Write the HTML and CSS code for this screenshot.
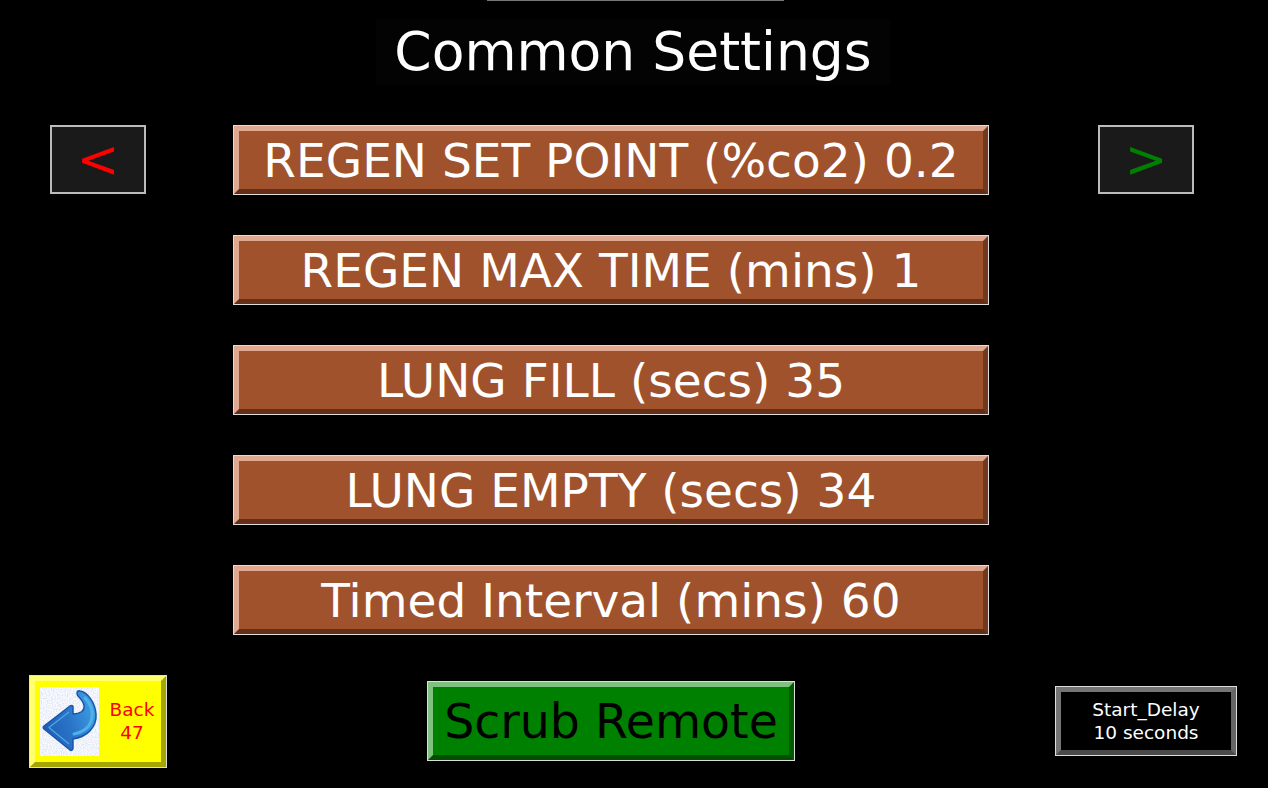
FILE: index.html
```html
<!DOCTYPE html>
<html lang="en">
<head>
    <meta charset="UTF-8">
    <title>Common Settings</title>
    <link rel="stylesheet" href="styles.css">
</head>
<body>
    <div class="top-rule"></div>
    <h1 class="title">Common Settings</h1>

    <div class="settings">
        <button class="nav nav-prev">&lt;</button>
        <div class="setting-list">
            <button class="bevel setting">REGEN SET POINT (%co2) 0.2</button>
            <button class="bevel setting">REGEN MAX TIME (mins) 1</button>
            <button class="bevel setting">LUNG FILL (secs) 35</button>
            <button class="bevel setting">LUNG EMPTY (secs) 34</button>
            <button class="bevel setting">Timed Interval (mins) 60</button>
        </div>
        <button class="nav nav-next">&gt;</button>
    </div>

    <div class="footer">
        <button class="bevel back">
            <svg class="back-icon" width="59" height="69" viewBox="0 0 59 69">
                <defs>
                    <linearGradient id="arrow-fill" x1="0" y1="0.7" x2="1" y2="0.3">
                        <stop offset="0" stop-color="#1d5cb2"/>
                        <stop offset="0.5" stop-color="#2a75c8"/>
                        <stop offset="1" stop-color="#3f9fe2"/>
                    </linearGradient>
                    <filter id="speckle" x="0" y="0" width="100%" height="100%">
                        <feTurbulence type="fractalNoise" baseFrequency="0.8" numOctaves="2" seed="4"/>
                        <feColorMatrix values="0 0 0 0 0.66  0 0 0 0 0.72  0 0 0 0 0.88  0 0 0 2 -0.75"/>
                    </filter>
                </defs>
                <rect width="59" height="69" fill="#fafbfe"/>
                <rect width="59" height="69" filter="url(#speckle)"/>
                <path d="M40 4C47 5 55 15 56 27C57 40 47 50 33 52L33 61C33 63 31 64 30 63L4 42C3 41 3 40 4 39L30 19C32 18 33 19 33 20L33 27C40 27 45 24 44 18C43 14 41 12 38 9C36 6 37 3 40 4Z" fill="url(#arrow-fill)" stroke="#1a55ac" stroke-width="1.500" stroke-linejoin="round"/>
                <path d="M45 11C50 16 53 22 52 30C51 39 44 45 34 47" fill="none" stroke="#4fb0ec" stroke-width="3" stroke-linecap="round"/>
                <path d="M29 25L9 40.500L29 57" fill="none" stroke="#4aa3e4" stroke-width="1.500" stroke-linejoin="round"/>
            </svg>
            <span class="back-label">Back<br>47</span>
        </button>
        <button class="bevel scrub">Scrub Remote</button>
        <button class="bevel delay">Start_Delay<br>10 seconds</button>
    </div>
</body>
</html>
```

FILE: styles.css
```css
body {
    margin: 0;
    height: 788px;
    overflow: hidden;
    background-color: #000;
    color: #fff;
    font-family: "DejaVu Sans", sans-serif;
}

button {
    padding: 0;
    font-family: inherit;
    cursor: pointer;
}

.top-rule {
    width: 297px;
    height: 1px;
    margin-left: 487px;
    background-color: #777;
}

.title {
    width: 514px;
    height: 66px;
    margin: 18px 0 0 376px;
    background-color: #030303;
    font-size: 53.5px;
    font-weight: normal;
    line-height: 66px;
    text-align: center;
}

/* raised look: the mitred border corners do the work */
.bevel {
    box-sizing: border-box;
    border-style: solid;
    border-width: 6px;
    outline: 1px solid #ddd;
    outline-offset: -1px;
}

.settings {
    display: flex;
    align-items: flex-start;
    margin: 40px 0 0 50px;
}

.nav {
    box-sizing: border-box;
    width: 96px;
    height: 69px;
    border: 2px solid #bbb;
    background-color: #1a1a1a;
    font-size: 51px;
    line-height: 1;
}

.nav-prev {
    color: #f00;
}

.nav-next {
    color: #008000;
}

.setting-list {
    display: flex;
    flex-direction: column;
    gap: 40px;
    width: 756px;
    margin: 0 109px 0 87px;
}

.setting {
    height: 70px;
    background-color: #a0522d;
    border-color: #dfa890 #703a20 #652f17 #dfa890;
    color: #fff;
    font-size: 47px;
}

.footer {
    display: flex;
    align-items: flex-start;
    margin: 40px 0 0 29px;
}

.back {
    display: flex;
    align-items: center;
    width: 138px;
    height: 93px;
    padding: 0 0 0 5px;
    background-color: #ff0;
    border-color: #ffff70 #a6a600 #a6a600 #ffff70;
    color: #f00;
    font-size: 18.5px;
}

.back-icon {
    flex-shrink: 0;
}

.back-label {
    flex: 1;
    padding: 0 0 2px 4px;
    line-height: 23px;
    text-align: center;
}

.scrub {
    width: 368px;
    height: 80px;
    margin: 6px 0 0 260px;
    background-color: #008000;
    border-color: #80c080 #005a00 #005000 #80c080;
    color: #000;
    font-size: 47.4px;
}

.delay {
    width: 182px;
    height: 70px;
    margin: 11px 0 0 260px;
    background-color: #000;
    border-color: #747474 #666 #4a4a4a #747474;
    color: #fff;
    font-size: 18.5px;
    line-height: 23px;
}
```
